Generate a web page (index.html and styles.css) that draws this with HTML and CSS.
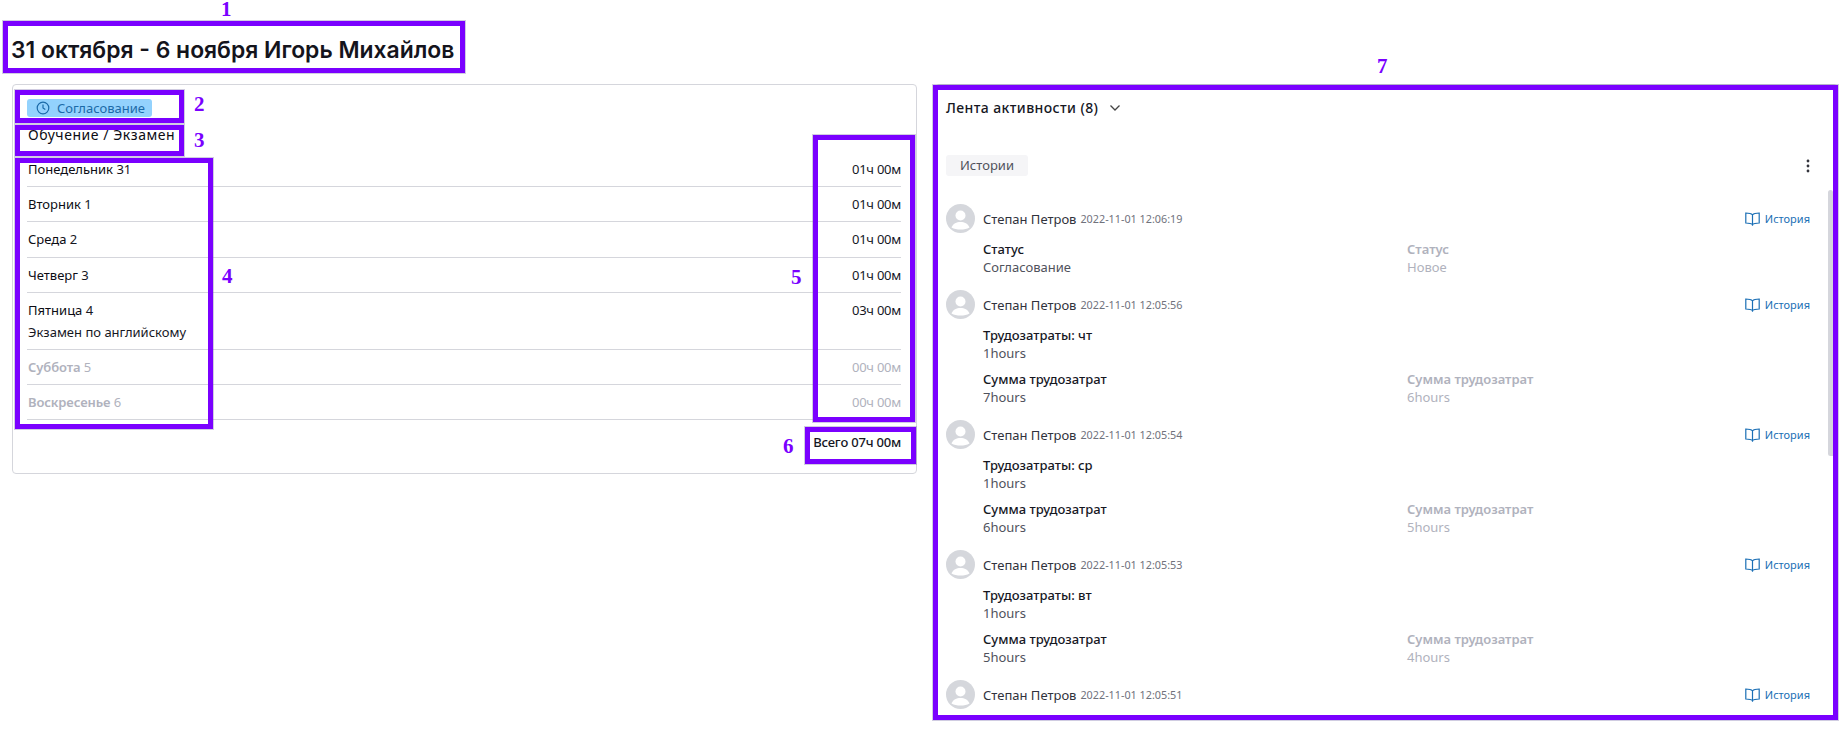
FILE: index.html
```html
<!DOCTYPE html>
<html lang="ru">
<head>
<meta charset="utf-8">
<title>Таймшит</title>
<link rel="stylesheet" href="styles.css">
</head>
<body>
<svg class="defs" width="0" height="0" aria-hidden="true">
  <symbol id="avatar" viewBox="0 0 29 29">
    <circle cx="14.5" cy="14.5" r="14.5" fill="#d5d7dc"/>
    <circle cx="14.5" cy="11.5" r="5" fill="#fff"/>
    <path d="M5.5 23.5c1.5-4 5-5.6 9-5.6s7.500 1.600 9 5.600c-2.500 1.400-5.500 2-9 2s-6.500-.6-9-2z" fill="#fff"/>
  </symbol>
  <symbol id="book" viewBox="0 0 15 14">
    <path d="M7.500 2.800C6.300 1.500 4 1 .8 1v10c3.200 0 5.500.4 6.700 1.700 1.200-1.300 3.500-1.700 6.700-1.700V1c-3.200 0-5.500.5-6.700 1.800zM7.500 2.800v11" fill="none" stroke="currentColor" stroke-width="1.200"/>
  </symbol>
</svg>

<header class="page-head">
  <h1 class="page-title">31 октября - 6 ноября Игорь Михайлов</h1>
</header>

<main class="layout">
  <section class="card sheet">
    <span class="status">
      <svg class="status-icon" viewBox="0 0 14 14" aria-hidden="true"><circle cx="7" cy="7" r="5.800" fill="none" stroke="currentColor" stroke-width="1.200"/><path d="M7 3.600V7l2.300 1.500" fill="none" stroke="currentColor" stroke-width="1.200"/></svg>
      Согласование
    </span>
    <div class="category">Обучение / Экзамен</div>
    <div class="day">
      <div><b>Понедельник</b> 31</div><div class="time">01ч 00м</div>
    </div>
    <div class="day">
      <div><b>Вторник</b> 1</div><div class="time">01ч 00м</div>
    </div>
    <div class="day">
      <div><b>Среда</b> 2</div><div class="time">01ч 00м</div>
    </div>
    <div class="day">
      <div><b>Четверг</b> 3</div><div class="time">01ч 00м</div>
    </div>
    <div class="day day-tall">
      <div><b>Пятница</b> 4<div class="note">Экзамен по английскому</div></div><div class="time">03ч 00м</div>
    </div>
    <div class="day day-off">
      <div><b>Суббота</b> 5</div><div class="time">00ч 00м</div>
    </div>
    <div class="day day-off">
      <div><b>Воскресенье</b> 6</div><div class="time">00ч 00м</div>
    </div>
    <div class="total">Всего 07ч 00м</div>
  </section>

  <section class="card feed">
    <div class="feed-title">
      Лента активности (8)
      <svg class="chevron" viewBox="0 0 12 8" aria-hidden="true"><path d="M1.500 1.500L6 6l4.500-4.500" fill="none" stroke="#444" stroke-width="1.300"/></svg>
    </div>
    <div class="feed-tools">
      <span class="tab">Истории</span>
      <svg class="dots" viewBox="0 0 4 14" aria-hidden="true"><circle cx="2" cy="2" r="1.400"/><circle cx="2" cy="7" r="1.400"/><circle cx="2" cy="12" r="1.400"/></svg>
    </div>

    <article class="entry">
      <div class="entry-head">
        <svg class="avatar"><use href="#avatar"/></svg>
        <span class="author">Степан Петров</span><span class="date">2022-11-01 12:06:19</span>
        <a class="history"><svg class="book"><use href="#book"/></svg>История</a>
      </div>
      <div class="change">
        <div class="field"><div class="label">Статус</div><div class="value">Согласование</div></div>
        <div class="field old"><div class="label">Статус</div><div class="value">Новое</div></div>
      </div>
    </article>

    <article class="entry">
      <div class="entry-head">
        <svg class="avatar"><use href="#avatar"/></svg>
        <span class="author">Степан Петров</span><span class="date">2022-11-01 12:05:56</span>
        <a class="history"><svg class="book"><use href="#book"/></svg>История</a>
      </div>
      <div class="change">
        <div class="field"><div class="label">Трудозатраты: чт</div><div class="value">1hours</div></div>
      </div>
      <div class="change">
        <div class="field"><div class="label">Сумма трудозатрат</div><div class="value">7hours</div></div>
        <div class="field old"><div class="label">Сумма трудозатрат</div><div class="value">6hours</div></div>
      </div>
    </article>

    <article class="entry">
      <div class="entry-head">
        <svg class="avatar"><use href="#avatar"/></svg>
        <span class="author">Степан Петров</span><span class="date">2022-11-01 12:05:54</span>
        <a class="history"><svg class="book"><use href="#book"/></svg>История</a>
      </div>
      <div class="change">
        <div class="field"><div class="label">Трудозатраты: ср</div><div class="value">1hours</div></div>
      </div>
      <div class="change">
        <div class="field"><div class="label">Сумма трудозатрат</div><div class="value">6hours</div></div>
        <div class="field old"><div class="label">Сумма трудозатрат</div><div class="value">5hours</div></div>
      </div>
    </article>

    <article class="entry">
      <div class="entry-head">
        <svg class="avatar"><use href="#avatar"/></svg>
        <span class="author">Степан Петров</span><span class="date">2022-11-01 12:05:53</span>
        <a class="history"><svg class="book"><use href="#book"/></svg>История</a>
      </div>
      <div class="change">
        <div class="field"><div class="label">Трудозатраты: вт</div><div class="value">1hours</div></div>
      </div>
      <div class="change">
        <div class="field"><div class="label">Сумма трудозатрат</div><div class="value">5hours</div></div>
        <div class="field old"><div class="label">Сумма трудозатрат</div><div class="value">4hours</div></div>
      </div>
    </article>

    <article class="entry">
      <div class="entry-head">
        <svg class="avatar"><use href="#avatar"/></svg>
        <span class="author">Степан Петров</span><span class="date">2022-11-01 12:05:51</span>
        <a class="history"><svg class="book"><use href="#book"/></svg>История</a>
      </div>
    </article>

    <div class="scroll-thumb"></div>
  </section>
</main>

<div class="mark mark-1"></div><span class="num num-1">1</span>
<div class="mark mark-2"></div><span class="num num-2">2</span>
<div class="mark mark-3"></div><span class="num num-3">3</span>
<div class="mark mark-4"></div><span class="num num-4">4</span>
<div class="mark mark-5"></div><span class="num num-5">5</span>
<div class="mark mark-6"></div><span class="num num-6">6</span>
<div class="mark mark-7"></div><span class="num num-7">7</span>
</body>
</html>
```

FILE: styles.css
```css
* { box-sizing: border-box; }
html, body { height: 100%; }
body {
  margin: 0;
  background: #fff;
  color: #16171f;
  font-family: "Noto Sans", "Open Sans", sans-serif;
  font-size: 13px;
  line-height: 18px;
  overflow: hidden;
  position: relative;
}
.defs { position: absolute; }

.page-head { height: 84px; padding: 36px 0 0 11px; }
.page-title {
  margin: 0;
  font-family: Inter, "Noto Sans", sans-serif;
  font-size: 22.900px;
  line-height: 28px;
  font-weight: 600;
  color: #14141c;
  white-space: nowrap;
}

.layout { display: flex; align-items: flex-start; gap: 18px; padding-left: 12px; }
.card { border: 1px solid #d5d6dc; border-radius: 4px; background: #fff; }

.sheet { width: 905px; height: 390px; padding: 14px 15px 0 14px; }
.status {
  display: inline-flex; align-items: center; gap: 7px;
  height: 18px; width: 125px; padding-left: 9px;
  background: #93d2fd; border-radius: 3px;
  color: #1b6aa8; font-size: 13px;
}
.status-icon { width: 14px; height: 14px; flex: none; }
.category { margin-top: 6px; height: 27px; line-height: 20px; font-size: 14px; font-weight: 400; letter-spacing: .55px; padding-left: 1px; color: #0c0c14; }

.day {
  display: flex; justify-content: space-between; align-items: flex-start;
  height: 35.2px; padding: 8px 0 0 1px;
  border-bottom: 1px solid #d5d6dc;
}
.day b { font-weight: 400; color: #0c0c14; }
.day-tall { height: 56.8px; }
.note { margin-top: 4px; }
.day-off, .day-off .time { color: #b0b2bd; }
.day-off b { font-weight: 600; color: #b0b2bd; letter-spacing: -.1px; }
.time { white-space: nowrap; letter-spacing: -.25px; }
.total { text-align: right; font-weight: 500; margin-top: 13px; letter-spacing: -.2px; }

.feed { position: relative; width: 903px; height: 634px; padding: 13px 27px 0 10px; overflow: hidden; }
.feed-title { display: flex; align-items: center; gap: 11px; height: 20px; font-size: 14px; font-weight: 500; letter-spacing: .4px; }
.chevron { width: 12px; height: 8px; }
.feed-tools { display: flex; justify-content: space-between; align-items: center; margin-top: 37px; height: 21px; }
.tab { width: 82px; height: 21px; line-height: 20px; text-align: center; background: #f5f5f7; border-radius: 3px; color: #50525c; }
.dots { width: 4px; height: 14px; fill: #33343c; }

.entry { padding-bottom: 14px; }
.feed-tools + .entry { margin-top: 28px; }
.entry-head { display: flex; align-items: center; height: 29px; }
.avatar { width: 29px; height: 29px; margin-right: 8px; flex: none; }
.author { color: #30323c; margin-right: 4px; }
.date { color: #70727c; font-size: 10.800px; }
.history { display: inline-flex; align-items: center; gap: 5px; margin-left: auto; color: #1b6fb5; font-size: 11px; }
.book { width: 15px; height: 14px; }

.change { display: grid; grid-template-columns: 424px 1fr; margin: 7px 0 0 37px; }
.change + .change { margin-top: 8px; }
.label { font-weight: 500; color: #16171f; }
.value { color: #50525c; }
.old .label { font-weight: 600; }
.old .label, .old .value { color: #b0b2bd; }

.scroll-thumb { position: absolute; right: 4px; top: 105px; width: 5px; height: 266px; background: #d5d6dc; border-radius: 3px 3px 0 3px; }

.mark { position: absolute; border: 5px solid #7a00ff; box-shadow: 0 0 0 1px rgba(120, 110, 170, .35); pointer-events: none; }
.mark-1 { left: 3px; top: 21px; width: 462px; height: 52px; }
.mark-2 { left: 15px; top: 90px; width: 169px; height: 33px; }
.mark-3 { left: 15px; top: 125px; width: 169px; height: 31px; }
.mark-4 { left: 15px; top: 158px; width: 198px; height: 271px; }
.mark-5 { left: 813px; top: 135px; width: 102px; height: 287px; }
.mark-6 { left: 805px; top: 427px; width: 111px; height: 37px; }
.mark-7 { left: 933px; top: 85px; width: 905px; height: 635px; }

.num { position: absolute; font-family: "Liberation Serif", serif; font-weight: 700; font-size: 21px; line-height: 22px; color: #7a00ff; }
.num-1 { left: 221px; top: -2px; }
.num-2 { left: 194px; top: 93px; }
.num-3 { left: 194px; top: 129px; }
.num-4 { left: 222px; top: 265px; }
.num-5 { left: 791px; top: 266px; }
.num-6 { left: 783px; top: 435px; }
.num-7 { left: 1377px; top: 55px; }
```
